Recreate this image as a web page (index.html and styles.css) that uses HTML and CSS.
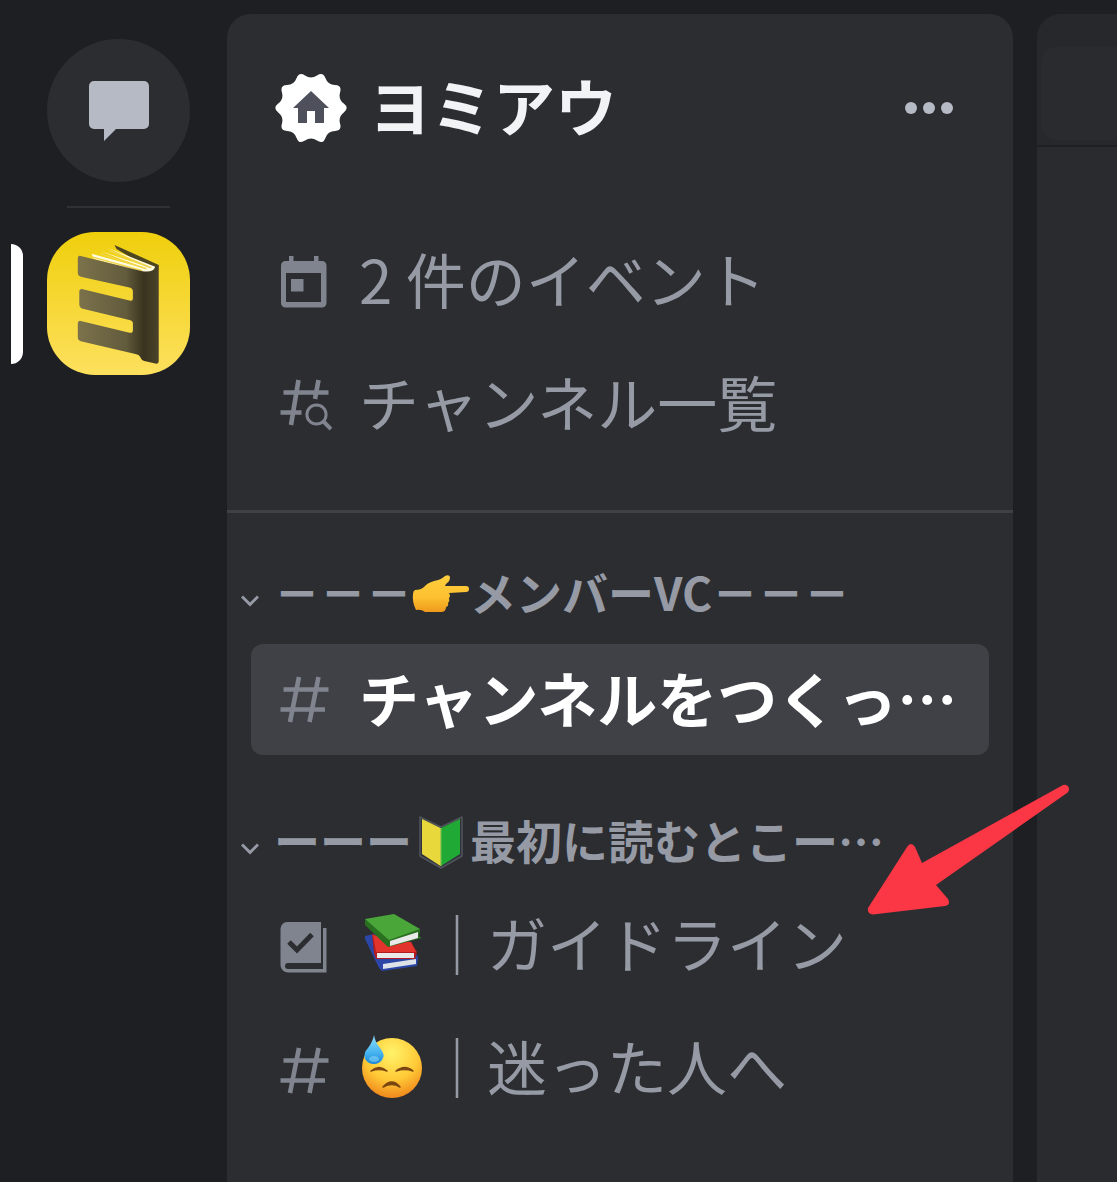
FILE: index.html
```html
<!DOCTYPE html>
<html lang="ja">
<head>
  <meta charset="UTF-8" />
  <meta name="viewport" content="width=device-width, initial-scale=1.0"/>
  <title>ヨミアウ</title>
  <link rel="stylesheet" href="styles.css">
</head>
<body>

  <svg class="defs" aria-hidden="true">
    <symbol id="hash" viewBox="0 0 49 47">
      <path d="M19 1L10 46M38.5 1L29.5 46M3.5 13.5H48.5M0.5 33.5H45" fill="none" stroke="currentColor" stroke-width="4.6"/>
    </symbol>
    <symbol id="chevron" viewBox="0 0 18 12">
      <path d="M1 1.5L9 9.5L17 1.5" fill="none" stroke="currentColor" stroke-width="3"/>
    </symbol>
  </svg>

  <div class="app">
    <!-- Server list -->
    <nav class="rail" aria-label="サーバー">
      <button class="dm-btn" aria-label="ダイレクトメッセージ">
        <svg width="62" height="62" viewBox="0 0 62 62">
          <path d="M6 1H56a5 5 0 0 1 5 5V44a5 5 0 0 1-5 5H28L16 61V49H6a5 5 0 0 1-5-5V6a5 5 0 0 1 5-5z" fill="#b5bac4"/>
        </svg>
      </button>
      <hr class="rail-line">
      <div class="server-item">
        <span class="pill"></span>
        <button class="server-btn" aria-label="ヨミアウ">
          <svg viewBox="0 0 144 144">
            <defs>
              <linearGradient id="yellow" x1="0" y1="0" x2="0" y2="1">
                <stop offset="0" stop-color="#efcf0c"/>
                <stop offset="1" stop-color="#fde05e"/>
              </linearGradient>
              <linearGradient id="cover" x1="31" y1="0" x2="112" y2="0" gradientUnits="userSpaceOnUse">
                <stop offset="0" stop-color="#7c734c"/>
                <stop offset=".6" stop-color="#625b3c"/>
                <stop offset=".82" stop-color="#39331f"/>
                <stop offset="1" stop-color="#4a432a"/>
              </linearGradient>
            </defs>
            <rect width="144" height="144" fill="url(#yellow)"/>
            <path d="M68 13L112 33V38L105 38L70 17z" fill="#4d461f"/>
            <path d="M45 22L100 37L53 19L104 36L61 16L109 35Q108 41 98 41L47 27z" fill="#fffbe0"/>
            <path d="M45 25L96 39M54 22L100 37M63 19L105 36" stroke="#efd54a" stroke-width="1.4" fill="none"/>
            <path d="M33 24L96 39.5Q108 41 109 35L112.5 33V130Q112.5 133 109 132.5L98 130Q95 129 94 126Q93 123.5 90 123L34 110Q31 109 31 106V92Q31 89 34 89.5L83 101.5Q86.5 102 86.5 99V92Q86.5 89.5 83 88.5L35 77Q32.5 76 32.5 73V60Q32.5 57 35 57.5L83 69Q86.5 70 86.5 67V60Q86.5 57 83 56L34 45Q31 44 31 41V27Q31 24 33 24z" fill="url(#cover)"/>
          </svg>
        </button>
      </div>
    </nav>

    <!-- Channel sidebar -->
    <aside class="sidebar">
      <header class="server-header">
        <svg class="badge" viewBox="-36 -36 72 72" aria-hidden="true">
          <path fill="#fff" d="M32.8-4.4Q38.5 0 32.8 4.4Q27.1 8.8 29.1 15.7Q31.1 22.6 24 22.9Q16.8 23.1 14.4 29.9Q11.9 36.6 6 32.6Q0 28.5-6 32.6Q-11.9 36.6-14.4 29.9Q-16.8 23.1-24 22.9Q-31.1 22.6-29.1 15.7Q-27.1 8.8-32.8 4.4Q-38.5 0-32.8-4.4Q-27.1-8.8-29.1-15.7Q-31.1-22.6-24-22.9Q-16.8-23.1-14.4-29.9Q-11.9-36.6-6-32.6Q0-28.5 6-32.6Q11.9-36.6 14.4-29.9Q16.8-23.1 24-22.9Q31.1-22.6 29.1-15.7Q27.1-8.8 32.8-4.4Z"/>
          <path fill="#4e515b" d="M0-17L18 0H13V15H4V3H-4V15H-13V0H-18z"/>
        </svg>
        <h1>ヨミアウ</h1>
        <button class="more-btn" aria-label="メニュー">
          <svg width="50" height="14" viewBox="0 0 50 14" fill="#b5bac4">
            <circle cx="7" cy="7" r="6"/><circle cx="25" cy="7" r="6"/><circle cx="43" cy="7" r="6"/>
          </svg>
        </button>
      </header>

      <div class="quick">
        <a class="row" href="#events">
          <span class="icon">
            <svg width="48" height="52" viewBox="0 0 48 52" fill="currentColor">
              <path fill-rule="evenodd" d="M9 0h4.5v5H34V0h4.5v5H42a4.5 4.5 0 0 1 4.5 4.5V47a4.5 4.5 0 0 1-4.5 4.5H5.5A4.5 4.5 0 0 1 1 47V9.5A4.5 4.5 0 0 1 5.5 5H9zM6 17V46H41V17z"/>
              <path d="M11 23h12.5v12.5H11z"/>
            </svg>
          </span>
          <span class="label">2 件のイベント</span>
        </a>
        <a class="row" href="#channels">
          <span class="icon">
            <svg width="52" height="52" viewBox="0 0 52 52" fill="none" stroke="currentColor" stroke-width="4.6">
              <path d="M18.5 1L11 46M38.5 1L35 20M3.5 13.5H48.5M0.5 33.5H21.5"/>
              <circle cx="36.5" cy="35.5" r="9.6" stroke-width="3"/>
              <path d="M43 42L51 50" stroke-width="4"/>
            </svg>
          </span>
          <span class="label">チャンネル一覧</span>
        </a>
      </div>

      <div class="channels">
        <button class="category">
          <svg class="chevron"><use href="#chevron"/></svg>
          <span class="cat-label dash">－－－</span>
          <svg class="cat-emoji" viewBox="0 0 58 54" role="img" aria-label="右を指す手">
            <defs>
              <linearGradient id="hand" x1="0" y1="0" x2="0" y2="1">
                <stop offset="0" stop-color="#ffcf3f"/>
                <stop offset=".6" stop-color="#fdc02f"/>
                <stop offset="1" stop-color="#ee9a1c"/>
              </linearGradient>
            </defs>
            <path fill="url(#hand)" d="M3 23Q9 23 12 20Q15 16 22 14Q29 13 33 9Q37 7 38 10Q38 14 35 16Q33 18 33 19H54Q57 19 57 22Q57 25 54 25L37 26Q39 29 37 31Q38 34 36 36Q37 39 34 40Q34 45 29 45H13Q9 42 4 43Q0 35 1 27Q1 24 3 23z"/>
          </svg>
          <span class="cat-label">メンバーVC<span class="dash">－－－</span></span>
        </button>

        <a class="row active" href="#create">
          <span class="icon"><svg width="49" height="47"><use href="#hash"/></svg></span>
          <span class="label">チャンネルをつくっ…</span>
        </a>

        <button class="category second">
          <svg class="chevron"><use href="#chevron"/></svg>
          <span class="cat-label">ーーー</span>
          <svg class="cat-emoji" viewBox="0 0 58 54" role="img" aria-label="初心者マーク">
            <path d="M8 2L29 12L50 2V41L29 53L8 41z" fill="#30343a" stroke="#50545b" stroke-width="1.5" stroke-linejoin="round"/>
            <path d="M10 4L28.5 13V51L10 39z" fill="#e9d83c"/>
            <path d="M48 4L29 13V51L48 39z" fill="#20a935"/>
            <path d="M28.8 13V51" stroke="#b5df55" stroke-width="1"/>
          </svg>
          <span class="cat-label">最初に読むとこー…</span>
        </button>

        <a class="row" href="#guideline">
          <span class="icon">
            <svg width="48" height="52" viewBox="0 0 48 52">
              <path fill="currentColor" d="M8 0H41V41H8a3 3 0 0 0 0 6H43V6H46.5V50.5H8a7.5 7.5 0 0 1-7.5-7V7A7 7 0 0 1 8 0z"/>
              <path d="M9 20L17 28L32 12.5" fill="none" stroke="#2b2d31" stroke-width="5"/>
            </svg>
          </span>
          <svg class="emoji" viewBox="0 0 66 66" role="img" aria-label="本">
            <path d="M5 26L14 24L57 45L58 48L57 56L22 61L19 58L5 29z" fill="#2c46a8"/>
            <path d="M23 54L56 49V54L23 59z" fill="#dde1e8"/>
            <path d="M12 24L29 30L51 32L57 42L55 49H16L14 43z" fill="#b21c1f"/>
            <path d="M13 25L29 30L51 32L56 42H16z" fill="#e2332d"/>
            <path d="M17 43H54V48H17z" fill="#e9e9ea"/>
            <path d="M5 9L29 29L60 19V22L59 26L62 28L28 37L5 15z" fill="#28701f"/>
            <path d="M30 31L58 22V28L30 36z" fill="#e8ebea"/>
            <path d="M5 9L34 4L60 19L29 30z" fill="#4ba63a"/>
          </svg>
          <span class="label">｜ガイドライン</span>
        </a>

        <a class="row" href="#lost">
          <span class="icon"><svg width="49" height="47"><use href="#hash"/></svg></span>
          <svg class="emoji" viewBox="0 0 66 66" role="img" aria-label="冷や汗の顔">
            <defs>
              <radialGradient id="face" cx=".5" cy=".25" r=".75">
                <stop offset="0" stop-color="#fff36a"/>
                <stop offset=".6" stop-color="#ffc936"/>
                <stop offset="1" stop-color="#f0881c"/>
              </radialGradient>
              <linearGradient id="drop" x1="0" y1="0" x2="0" y2="1">
                <stop offset="0" stop-color="#8bdcfc"/>
                <stop offset=".6" stop-color="#48b5f0"/>
                <stop offset="1" stop-color="#1b86d8"/>
              </linearGradient>
            </defs>
            <circle cx="32" cy="35" r="30" fill="url(#face)"/>
            <path d="M11 38Q19 31 27 38Q19 35 11 38zM36 38Q45 31 53 38Q45 35 36 38z" fill="#7b4512" stroke="#7b4512" stroke-width="1.5" stroke-linejoin="round"/>
            <path d="M23 54Q32 44 40 54Q32 49 23 54z" fill="#7b4512" stroke="#7b4512" stroke-width="1.5" stroke-linejoin="round"/>
            <path d="M14 2Q15 9 20 15Q26 22 22 27Q19 31 14 31Q8 31 5 26Q3 20 8 15Q13 8 14 2z" fill="url(#drop)"/>
            <ellipse cx="14" cy="26" rx="5" ry="3" fill="#91ddfa" opacity=".5"/>
          </svg>
          <span class="label">｜迷った人へ</span>
        </a>
      </div>
    </aside>

    <main class="content">
      <div class="topbar"><div class="topbar-box"></div></div>
    </main>
  </div>

  <!-- Red arrow on top of everything -->
  <svg class="arrow" width="204" height="134" viewBox="0 0 204 134" aria-hidden="true">
    <path d="M1 124L40 63Q44 57 48 63L55 79L196 1Q200 0 202 4Q202 8 200 9L69 101L81 115Q84 121 78 122L6 130.5Q0 130 1 124z" fill="#fb3745"/>
  </svg>

</body>
</html>
```
FILE: styles.css
```css
* {
  box-sizing: border-box;
}

body {
  margin: 0;
  background: #1e1f23;
  color: #959aa5;
  font-family: 'Noto Sans CJK JP', sans-serif;
}

button {
  padding: 0;
  border: none;
  background: none;
  color: inherit;
  font: inherit;
  cursor: pointer;
}

svg {
  display: block;
  flex-shrink: 0;
}

.defs {
  position: absolute;
  width: 0;
  height: 0;
}

.app {
  display: grid;
  grid-template-columns: 227px minmax(0, 1fr) 104px;
  min-height: 100vh;
}

/* server list */
.rail {
  display: flex;
  flex-direction: column;
  align-items: flex-end;
  gap: 24px;
  padding: 39px 37px 0 11px;
}

.dm-btn {
  display: flex;
  align-items: center;
  justify-content: center;
  width: 143px;
  height: 143px;
  border-radius: 50%;
  background: #2c2d31;
}

.rail-line {
  width: 103px;
  height: 2px;
  margin: 0 20px;
  border: none;
  background: #2f3136;
}

.server-item {
  display: flex;
  align-items: center;
  gap: 24px;
}

.pill {
  width: 12px;
  height: 120px;
  border-radius: 0 12px 12px 0;
  background: #fff;
}

.server-btn {
  width: 143px;
  height: 143px;
  border-radius: 48px;
  overflow: hidden;
}

/* sidebar */
.sidebar {
  margin-top: 14px;
  border-radius: 24px 24px 0 0;
  background: #2c2d31;
}

.server-header {
  display: flex;
  align-items: center;
  gap: 22px;
  height: 188px;
  padding: 0 59px 0 48px;
}

.badge {
  width: 72px;
  height: 72px;
}

h1 {
  flex: 1;
  margin: 0;
  padding-bottom: 6px;
  color: #f2f3f5;
  font-size: 62px;
  line-height: 72px;
  font-weight: 700;
}

.quick {
  display: flex;
  flex-direction: column;
  gap: 12px;
  padding: 24px 24px 50px;
  border-bottom: 3px solid #3f4147;
}

.row {
  display: flex;
  align-items: center;
  height: 111px;
  padding: 0 29px;
  border-radius: 12px;
  color: #959aa5;
  font-size: 60px;
  line-height: 72px;
  font-weight: 400;
  text-decoration: none;
  white-space: nowrap;
}

.icon {
  width: 79px;
  color: #80848e;
}

.label {
  padding-bottom: 12px;
}

.quick .label {
  padding-bottom: 8px;
}

.row.active {
  background: #404147;
  color: #fff;
  font-weight: 700;
}

.row.active .label {
  padding-bottom: 6px;
}

.emoji {
  width: 68px;
  height: 66px;
  margin-bottom: 10px;
}

.channels {
  display: flex;
  flex-direction: column;
  padding: 31px 24px 0;
}

.channels .row + .row {
  margin-top: 12px;
}

.category {
  display: flex;
  align-items: center;
  height: 100px;
  margin-left: -10px;
  font-size: 46px;
  line-height: 56px;
  font-weight: 700;
  white-space: nowrap;
}

.category.second {
  margin-top: 37px;
}

.chevron {
  width: 18px;
  height: 12px;
  margin: 14px 15px 0 0;
}

.cat-label {
  padding-bottom: 6px;
}

.dash {
  font-weight: 900;
}

.cat-emoji {
  width: 58px;
  height: 54px;
}

/* right side */
.content {
  margin: 14px 0 0 24px;
  border-radius: 24px 0 0 0;
  background: #2a2b2f;
}

.topbar {
  height: 133px;
  padding: 33px 0 5px 4px;
  border-bottom: 2px solid #1f2024;
  border-radius: 24px 0 0 0;
  background: #27282c;
}

.topbar-box {
  height: 100%;
  border-radius: 16px 0 0 16px;
  background: #2a2b2f;
}

.arrow {
  position: absolute;
  left: 867px;
  top: 784px;
  pointer-events: none;
}
```
